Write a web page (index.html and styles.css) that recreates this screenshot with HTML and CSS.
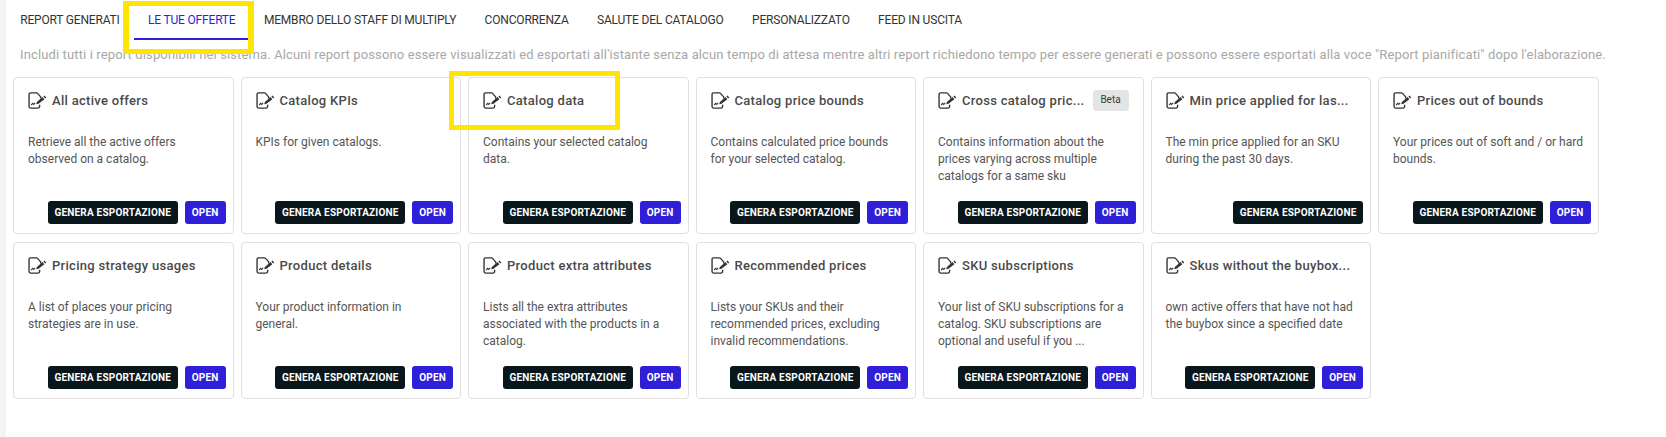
FILE: index.html
```html
<!DOCTYPE html>
<html lang="en">
<head>
  <meta charset="UTF-8" />
  <title>Report</title>
  <link rel="stylesheet" href="styles.css">
</head>
<body>
  <svg class="sprite" width="0" height="0">
    <symbol id="report-icon" viewBox="0 0 18 16">
      <path d="M8.6 .8H2.4C1.5 .8 1 1.3 1 2.2v11.6c0 .9.5 1.4 1.4 1.4h7.2c.9 0 1.4-.5 1.4-1.4V12" fill="none" stroke="currentColor" stroke-width="1.3"/>
      <path d="M8.6 .8L12 4.6V6" fill="none" stroke="currentColor" stroke-width="1.3"/>
      <path d="M3 12.4l1.4-1.7 1.1 1 1.3-1.6" fill="none" stroke="currentColor" stroke-width="1"/>
      <path d="M7.8 11.6l.6-2.2 5.4-4.6 1.7 1.9-5.5 4.4zM14.6 4.1l1-.8 1.7 1.9-1 .8z" fill="currentColor"/>
    </symbol>
  </svg>

  <div class="panel">
    <nav class="tabs">
      <a class="tab">Report generati</a>
      <a class="tab active">Le tue offerte</a>
      <a class="tab">Membro dello staff di Multiply</a>
      <a class="tab">Concorrenza</a>
      <a class="tab">Salute del catalogo</a>
      <a class="tab">Personalizzato</a>
      <a class="tab">Feed in uscita</a>
    </nav>

    <p class="intro">Includi tutti i report disponibili nel sistema. Alcuni report possono essere visualizzati ed esportati all'istante senza alcun tempo di attesa mentre altri report richiedono tempo per essere generati e possono essere esportati alla voce "Report pianificati" dopo l'elaborazione.</p>

    <div class="cards">
      <div class="card">
        <div class="card-head"><svg class="icon"><use href="#report-icon"/></svg><h3>All active offers</h3></div>
        <p class="desc">Retrieve all the active offers observed on a catalog.</p>
        <div class="actions"><button class="btn dark">Genera esportazione</button><button class="btn blue">Open</button></div>
      </div>
      <div class="card">
        <div class="card-head"><svg class="icon"><use href="#report-icon"/></svg><h3>Catalog KPIs</h3></div>
        <p class="desc">KPIs for given catalogs.</p>
        <div class="actions"><button class="btn dark">Genera esportazione</button><button class="btn blue">Open</button></div>
      </div>
      <div class="card">
        <div class="card-head"><svg class="icon"><use href="#report-icon"/></svg><h3>Catalog data</h3></div>
        <p class="desc">Contains your selected catalog data.</p>
        <div class="actions"><button class="btn dark">Genera esportazione</button><button class="btn blue">Open</button></div>
      </div>
      <div class="card">
        <div class="card-head"><svg class="icon"><use href="#report-icon"/></svg><h3>Catalog price bounds</h3></div>
        <p class="desc">Contains calculated price bounds for your selected catalog.</p>
        <div class="actions"><button class="btn dark">Genera esportazione</button><button class="btn blue">Open</button></div>
      </div>
      <div class="card">
        <div class="card-head"><svg class="icon"><use href="#report-icon"/></svg><h3>Cross catalog pric...</h3><span class="beta">Beta</span></div>
        <p class="desc">Contains information about the prices varying across multiple catalogs for a same sku</p>
        <div class="actions"><button class="btn dark">Genera esportazione</button><button class="btn blue">Open</button></div>
      </div>
      <div class="card">
        <div class="card-head"><svg class="icon"><use href="#report-icon"/></svg><h3>Min price applied for las...</h3></div>
        <p class="desc">The min price applied for an SKU during the past 30 days.</p>
        <div class="actions"><button class="btn dark">Genera esportazione</button></div>
      </div>
      <div class="card">
        <div class="card-head"><svg class="icon"><use href="#report-icon"/></svg><h3>Prices out of bounds</h3></div>
        <p class="desc">Your prices out of soft and / or hard bounds.</p>
        <div class="actions"><button class="btn dark">Genera esportazione</button><button class="btn blue">Open</button></div>
      </div>
      <div class="card">
        <div class="card-head"><svg class="icon"><use href="#report-icon"/></svg><h3>Pricing strategy usages</h3></div>
        <p class="desc">A list of places your pricing strategies are in use.</p>
        <div class="actions"><button class="btn dark">Genera esportazione</button><button class="btn blue">Open</button></div>
      </div>
      <div class="card">
        <div class="card-head"><svg class="icon"><use href="#report-icon"/></svg><h3>Product details</h3></div>
        <p class="desc">Your product information in general.</p>
        <div class="actions"><button class="btn dark">Genera esportazione</button><button class="btn blue">Open</button></div>
      </div>
      <div class="card">
        <div class="card-head"><svg class="icon"><use href="#report-icon"/></svg><h3>Product extra attributes</h3></div>
        <p class="desc">Lists all the extra attributes associated with the products in a catalog.</p>
        <div class="actions"><button class="btn dark">Genera esportazione</button><button class="btn blue">Open</button></div>
      </div>
      <div class="card">
        <div class="card-head"><svg class="icon"><use href="#report-icon"/></svg><h3>Recommended prices</h3></div>
        <p class="desc">Lists your SKUs and their recommended prices, excluding invalid recommendations.</p>
        <div class="actions"><button class="btn dark">Genera esportazione</button><button class="btn blue">Open</button></div>
      </div>
      <div class="card">
        <div class="card-head"><svg class="icon"><use href="#report-icon"/></svg><h3>SKU subscriptions</h3></div>
        <p class="desc">Your list of SKU subscriptions for a catalog. SKU subscriptions are optional and useful if you ...</p>
        <div class="actions"><button class="btn dark">Genera esportazione</button><button class="btn blue">Open</button></div>
      </div>
      <div class="card">
        <div class="card-head"><svg class="icon"><use href="#report-icon"/></svg><h3>Skus without the buybox...</h3></div>
        <p class="desc">own active offers that have not had the buybox since a specified date</p>
        <div class="actions"><button class="btn dark">Genera esportazione</button><button class="btn blue">Open</button></div>
      </div>
    </div>

    <div class="mark mark-tab"></div>
    <div class="mark mark-card"></div>
  </div>
</body>
</html>
```

FILE: styles.css
```css
:root {
  --blue: #2f1fd8;
  --dark: #09171c;
  --line: #e0e0e0;
  --mark: #ffe500;
}

html, body {
  margin: 0;
  height: 100%;
  overflow: hidden;
}

body {
  font-family: Roboto, "Liberation Sans", sans-serif;
  background-color: #f3f4f7;
  color: #3c3c3c;
}

.sprite {
  position: absolute;
}

.panel {
  position: relative;
  margin-left: 6px;
  height: 437px;
  background-color: #fff;
}

.tabs {
  display: flex;
  height: 40px;
}

.tab {
  box-sizing: border-box;
  height: 40px;
  padding: 12px 14.2px 0;
  font-size: 12px;
  line-height: 16px;
  letter-spacing: -0.18px;
  text-transform: uppercase;
  color: #333;
}

.tab.active {
  color: var(--blue);
  border-bottom: 2px solid var(--blue);
}

.intro {
  margin: 7px 0 0 14px;
  font-size: 13px;
  line-height: 16px;
  letter-spacing: 0.13px;
  white-space: nowrap;
  color: #a8a8a8;
}

.cards {
  display: grid;
  grid-template-columns: repeat(7, 220.5px);
  grid-auto-rows: 157px;
  gap: 8px 7px;
  margin: 14px 0 0 7px;
}

.card {
  box-sizing: border-box;
  display: flex;
  flex-direction: column;
  padding: 11px 7px 9px 14px;
  border: 1px solid var(--line);
  border-radius: 4px;
  background-color: #fff;
}

.card-head {
  display: flex;
  align-items: center;
  height: 22px;
}

.icon {
  flex: none;
  width: 19px;
  height: 17px;
  margin-right: 5px;
  color: #333;
}

.card-head h3 {
  flex: 1;
  min-width: 0;
  margin: 0;
  font-size: 13px;
  font-weight: 500;
  letter-spacing: 0.3px;
  white-space: nowrap;
  color: #4a4a4a;
}

.beta {
  flex: none;
  width: 36px;
  height: 21px;
  margin: 0 7px 0 8px;
  border-radius: 4px;
  background-color: #e4e4e4;
  font-size: 10px;
  line-height: 19px;
  text-align: center;
}

.desc {
  margin: 23px 7px 0 0;
  font-size: 12px;
  line-height: 17px;
  color: #555;
}

.actions {
  display: flex;
  justify-content: flex-end;
  gap: 7px;
  margin-top: auto;
}

.btn {
  height: 23px;
  border: 0;
  border-radius: 3px;
  font-family: inherit;
  font-size: 10px;
  font-weight: 700;
  letter-spacing: 0.2px;
  text-transform: uppercase;
  color: #fff;
}

.btn.dark {
  padding: 0 6.5px;
  background-color: var(--dark);
}

.btn.blue {
  padding: 0 7px;
  background-color: var(--blue);
}

/* yellow boxes drawn on top of the screenshot */
.mark {
  position: absolute;
  box-sizing: border-box;
  border: 5px solid var(--mark);
}

.mark-tab {
  left: 117px;
  top: 1px;
  width: 131px;
  height: 53px;
  border-width: 5px 6px;
}

.mark-card {
  left: 443px;
  top: 71px;
  width: 171px;
  height: 59px;
}
```
